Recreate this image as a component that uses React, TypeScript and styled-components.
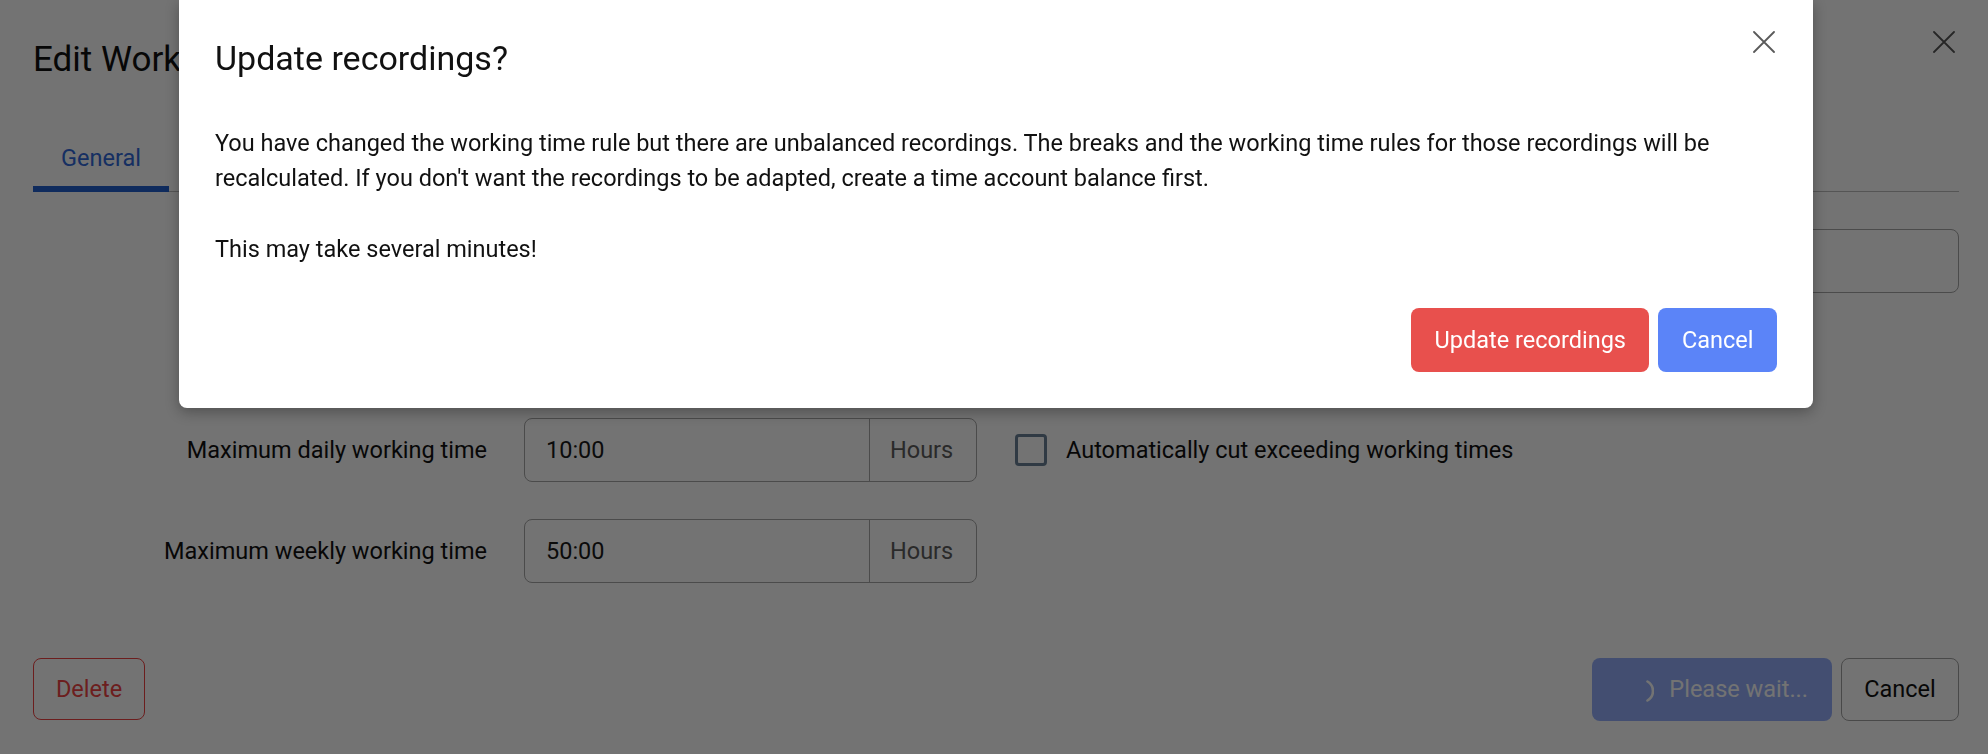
import styled, { createGlobalStyle } from "styled-components";

const GlobalStyle = createGlobalStyle`
  html, body {
    margin: 0;
    padding: 0;
  }

  body {
    font-family: Roboto, "Noto Sans", Arial, sans-serif;
    background: #ffffff;
    color: #212121;
    overflow: hidden;
  }

  * {
    box-sizing: border-box;
  }
`;

// body text size used across the form, buttons and dialog
const TEXT = "23.5px";

interface ButtonProps {
  variant: "danger" | "primary";
}

interface TabProps {
  active?: boolean;
}

const CloseIcon = () => (
  <svg width="22" height="22" viewBox="0 0 22 22">
    <path d="M1 1 L21 21 M21 1 L1 21" stroke="currentColor" strokeWidth="1.8" strokeLinecap="round" />
  </svg>
);

const SpinnerIcon = () => (
  <svg width="24" height="24" viewBox="0 0 24 24">
    <path d="M17.5 2.5 A11 11 0 0 1 17.5 21.5" fill="none" stroke="currentColor" strokeWidth="2.6" strokeLinecap="round" />
  </svg>
);

const App = () => {
  return (
    <>
      <GlobalStyle />
      <Page>
        <Header>
          <Title>Edit Working time rule</Title>
          <CloseButton>
            <CloseIcon />
          </CloseButton>
        </Header>

        <TabList>
          <Tab active>General</Tab>
          <Tab>Breaks</Tab>
          <Tab>Surcharges</Tab>
        </TabList>

        <Form>
          <Label>Name</Label>
          <TextInput>Standard</TextInput>

          <Label>Options</Label>
          <CheckRow>
            <CheckBox />
            <span>Default rule for new employees</span>
          </CheckRow>

          <Label>Maximum daily working time</Label>
          <CheckRow>
            <InputGroup>
              <InputValue>10:00</InputValue>
              <Addon>Hours</Addon>
            </InputGroup>
            <CheckBox />
            <span>Automatically cut exceeding working times</span>
          </CheckRow>

          <Label>Maximum weekly working time</Label>
          <CheckRow>
            <InputGroup>
              <InputValue>50:00</InputValue>
              <Addon>Hours</Addon>
            </InputGroup>
          </CheckRow>
        </Form>

        <Footer>
          <DeleteButton>Delete</DeleteButton>
          <FooterRight>
            <WaitButton disabled>
              <SpinnerIcon />
              Please wait...
            </WaitButton>
            <OutlineButton>Cancel</OutlineButton>
          </FooterRight>
        </Footer>
      </Page>

      <Backdrop />

      <Modal>
        <ModalHeader>
          <ModalTitle>Update recordings?</ModalTitle>
          <ModalClose>
            <CloseIcon />
          </ModalClose>
        </ModalHeader>
        <ModalBody>
          <p>
            You have changed the working time rule but there are unbalanced
            recordings. The breaks and the working time rules for those
            recordings will be recalculated. If you don't want the recordings to
            be adapted, create a time account balance first.
          </p>
          <p>This may take several minutes!</p>
        </ModalBody>
        <ModalActions>
          <ModalButton variant="danger">Update recordings</ModalButton>
          <ModalButton variant="primary">Cancel</ModalButton>
        </ModalActions>
      </Modal>
    </>
  );
};

const Page = styled.div`
  height: 754px;
  padding: 0 29px 0 33px;
  display: flex;
  flex-direction: column;
`;

const Header = styled.div`
  display: flex;
  justify-content: space-between;
  align-items: flex-start;
`;

const Title = styled.h1`
  margin: 40px 0 0;
  font-size: 35px;
  line-height: 39.6px;
  font-weight: 400;
  color: #111111;
`;

const CloseButton = styled.div`
  margin-top: 31px;
  margin-right: 4px;
  width: 22px;
  height: 22px;
  color: #555555;
  display: flex;
`;

const TabList = styled.div`
  margin-top: 49px;
  display: flex;
  border-bottom: 1px solid #bdbdbd;
`;

const Tab = styled.div<TabProps>`
  padding: 12px 28px 10px;
  margin-bottom: -1px;
  font-size: ${TEXT};
  line-height: 35.2px;
  color: ${({ active }) => (active ? "#3169da" : "#555555")};
  border-bottom: 6px solid ${({ active }) => (active ? "#2360cf" : "transparent")};
`;

const Form = styled.div`
  margin-top: 37px;
  display: grid;
  grid-template-columns: 454px 1fr;
  column-gap: 37px;
  row-gap: 37px;
  align-items: center;
  font-size: ${TEXT};
`;

const Label = styled.div`
  text-align: right;
  color: #111111;
`;

const TextInput = styled.div`
  height: 64px;
  border: 1px solid #a6a6a6;
  border-radius: 8px;
  padding: 0 21px;
  display: flex;
  align-items: center;
`;

const CheckRow = styled.div`
  display: flex;
  align-items: center;
  min-height: 51px;
  color: #111111;

  & > span {
    margin-left: 19px;
  }
`;

const CheckBox = styled.div`
  width: 32px;
  height: 32px;
  border: 3px solid #6a8298;
  border-radius: 4px;
  flex-shrink: 0;
`;

const InputGroup = styled.div`
  width: 453px;
  height: 64px;
  border: 1px solid #a6a6a6;
  border-radius: 8px;
  display: flex;
  margin-right: 38px;
`;

const InputValue = styled.div`
  flex: 1;
  padding: 0 21px;
  display: flex;
  align-items: center;
  color: #1a1a1a;
`;

const Addon = styled.div`
  width: 107px;
  border-left: 1px solid #a6a6a6;
  padding: 0 20px;
  display: flex;
  align-items: center;
  color: #5e5e5e;
`;

const Footer = styled.div`
  margin-top: 75px;
  display: flex;
  justify-content: space-between;
  align-items: center;
`;

const FooterRight = styled.div`
  display: flex;
  gap: 9px;
`;

const BaseButton = styled.button`
  font-family: inherit;
  font-size: ${TEXT};
  height: 63px;
  border-radius: 8px;
  padding: 0 23px;
  display: flex;
  align-items: center;
  cursor: pointer;
`;

const DeleteButton = styled(BaseButton)`
  height: 62px;
  width: 112px;
  justify-content: center;
  background: #ffffff;
  color: #ef4444;
  border: 1px solid #ef4444;
`;

const WaitButton = styled(BaseButton)`
  width: 240px;
  justify-content: flex-end;
  padding: 0 24px 0 0;
  gap: 15px;
  background: #5b84f8;
  color: #ffffff;
  border: none;
  opacity: 0.65;

  & svg {
    margin-top: 4px;
  }
`;

const OutlineButton = styled(BaseButton)`
  width: 118px;
  justify-content: center;
  background: #ffffff;
  color: #111111;
  border: 1px solid #a3a3a3;
`;

const Backdrop = styled.div`
  position: fixed;
  inset: 0;
  background: rgba(0, 0, 0, 0.55);
`;

const Modal = styled.div`
  position: absolute;
  top: 0;
  left: 179px;
  width: 1634px;
  padding: 31px 36px 36px;
  background: #ffffff;
  border-radius: 0 0 8px 8px;
  box-shadow: 0 4px 14px rgba(0, 0, 0, 0.3);
`;

const ModalHeader = styled.div`
  display: flex;
  justify-content: space-between;
  align-items: flex-start;
`;

const ModalTitle = styled.h2`
  margin: 8px 0 0;
  font-size: 34px;
  line-height: 39.6px;
  font-weight: 400;
  color: #111111;
`;

const ModalClose = styled.div`
  width: 22px;
  height: 22px;
  margin-right: 2px;
  color: #5a5a5a;
  display: flex;
`;

const ModalBody = styled.div`
  margin-top: 47px;
  font-size: ${TEXT};
  line-height: 35.2px;
  color: #111111;

  & p {
    margin: 0;
  }

  & p + p {
    margin-top: 35.6px;
  }
`;

const ModalActions = styled.div`
  margin-top: 41px;
  display: flex;
  justify-content: flex-end;
  gap: 9px;
`;

const ModalButton = styled.button<ButtonProps>`
  font-family: inherit;
  font-size: ${TEXT};
  height: 64px;
  padding: 0 23.5px;
  border: none;
  border-radius: 8px;
  color: #ffffff;
  background: ${({ variant }) => (variant === "danger" ? "#e8504d" : "#5b84f8")};
  cursor: pointer;
`;

export default App;
